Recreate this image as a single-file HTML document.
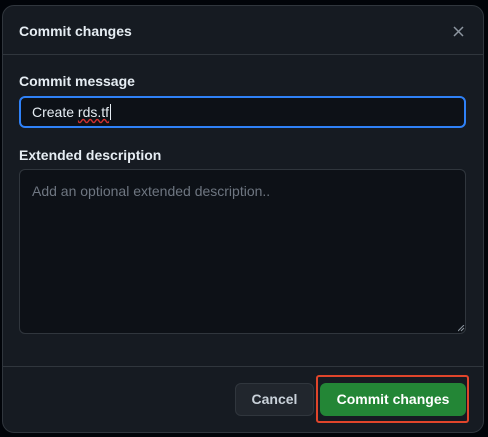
<html><head><style>
body{margin:0;width:488px;height:437px;background:#010409;font-family:"Liberation Sans",sans-serif;position:relative;overflow:hidden}
.d{position:absolute;left:2px;top:5px;width:480px;height:426px;background:#161b22;border:1px solid #30363d;border-radius:12px}
.a{position:absolute}
</style></head><body>
<div class="d"></div>
<div class="a" style="left:19px;top:23px;color:#e6edf3;font-weight:bold;font-size:14px">Commit changes</div>
<svg class="a" style="left:453px;top:26px" width="11" height="11"><path d="M1 1L10 10M10 1L1 10" stroke="#8d96a0" stroke-width="1.5"/></svg>
<div class="a" style="left:3px;top:54px;width:480px;height:1px;background:#30363d"></div>
<div class="a" style="left:19px;top:73px;color:#e6edf3;font-weight:bold;font-size:14px">Commit message</div>
<div class="a" style="left:19px;top:96px;width:443px;height:28px;border:2px solid #2f81f7;border-radius:6px;background:#0d1117;color:#e6edf3;font-size:14px;line-height:28px;text-indent:11px">Create <span style="text-decoration:underline wavy #d03030">rds.tf</span><span style="border-left:1px solid #e6edf3;margin-left:1px"></span></div>
<div class="a" style="left:19px;top:147px;color:#e6edf3;font-weight:bold;font-size:14px">Extended description</div>
<div class="a" style="left:19px;top:169px;width:445px;height:163px;border:1px solid #30363d;border-radius:6px;background:#0d1117;color:#6e7681;font-size:14px;padding:0;"><div style="margin:13px 0 0 12px">Add an optional extended description..</div></div>
<svg class="a" style="left:458px;top:325px" width="7" height="7"><path d="M0 6L6 0M3 6L6 3" stroke="#8d96a0" stroke-width="1"/></svg>
<div class="a" style="left:3px;top:366px;width:480px;height:1px;background:#30363d"></div>
<div class="a" style="left:235px;top:383px;width:77px;height:31px;border:1px solid #30363d;border-radius:6px;background:#21262d;color:#c9d1d9;font-weight:bold;font-size:14px;line-height:31px;text-align:center">Cancel</div>
<div class="a" style="left:316px;top:375px;width:149px;height:44px;border:2px solid #e0452b;border-radius:3px"></div>
<div class="a" style="left:320px;top:383px;width:146px;height:33px;border-radius:6px;background:#238636;color:#fff;font-weight:bold;font-size:14px;line-height:33px;text-align:center">Commit changes</div>
</body></html>
